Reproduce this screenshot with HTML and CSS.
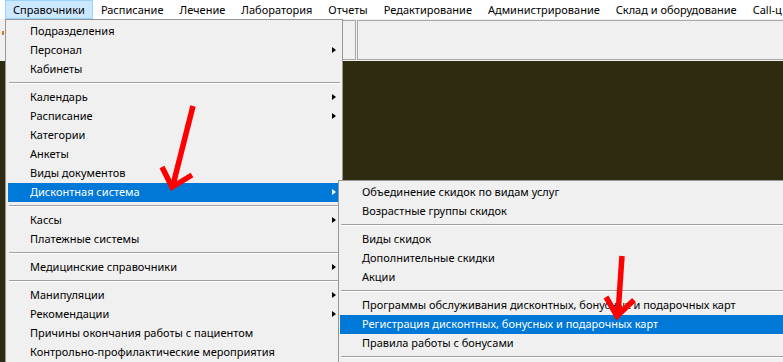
FILE: index.html
```html
<!doctype html>
<html lang="ru">
    <head>
        <meta charset="utf-8">
        <title>Справочники</title>
        <link rel="stylesheet" href="styles.css">
    </head>
    <body>
        <div class="menubar">
            <div class="mb-item active">Справочники</div>
            <div class="mb-item">Расписание</div>
            <div class="mb-item">Лечение</div>
            <div class="mb-item">Лаборатория</div>
            <div class="mb-item">Отчеты</div>
            <div class="mb-item">Редактирование</div>
            <div class="mb-item">Администрирование</div>
            <div class="mb-item">Склад и оборудование</div>
            <div class="mb-item">Call-ц</div>
        </div>
        <div class="toolbar">
            <div class="tb-left"><span class="tb-glyph"></span></div>
            <div class="tb-cell tb-small"></div>
            <div class="tb-cell tb-wide"></div>
        </div>
        <div class="workspace"></div>

        <!-- main dropdown -->
        <div class="dropdown main">
            <div class="item">Подразделения</div>
            <div class="item sub">Персонал</div>
            <div class="item">Кабинеты</div>
            <div class="sep"></div>
            <div class="item sub">Календарь</div>
            <div class="item sub">Расписание</div>
            <div class="item">Категории</div>
            <div class="item">Анкеты</div>
            <div class="item">Виды документов</div>
            <div class="item sub selected">Дисконтная система</div>
            <div class="sep"></div>
            <div class="item sub">Кассы</div>
            <div class="item">Платежные системы</div>
            <div class="sep"></div>
            <div class="item sub">Медицинские справочники</div>
            <div class="sep"></div>
            <div class="item sub">Манипуляции</div>
            <div class="item sub">Рекомендации</div>
            <div class="item">Причины окончания работы с пациентом</div>
            <div class="item">Контрольно-профилактические мероприятия</div>
        </div>

        <!-- discount submenu -->
        <div class="dropdown submenu">
            <div class="item">Объединение скидок по видам услуг</div>
            <div class="item">Возрастные группы скидок</div>
            <div class="sep"></div>
            <div class="item">Виды скидок</div>
            <div class="item">Дополнительные скидки</div>
            <div class="item">Акции</div>
            <div class="sep"></div>
            <div class="item">Программы обслуживания дисконтных, бонусных и подарочных карт</div>
            <div class="item selected">Регистрация дисконтных, бонусных и подарочных карт</div>
            <div class="item">Правила работы с бонусами</div>
            <div class="sep"></div>
        </div>

        <svg class="marks" width="783" height="362" viewBox="0 0 783 362">
            <g fill="none" stroke="#ff0000" stroke-width="5.5">
                <path d="M193 106 L173 185"/>
                <path d="M162 167 L172 187 L192 175"/>
                <path d="M622 256 L618 314"/>
                <path d="M606 297 L617 316 L634 300"/>
            </g>
        </svg>
    </body>
</html>
```

FILE: styles.css
```css
html, body {
    margin: 0;
    padding: 0;
}
body {
    position: relative;
    width: 783px;
    height: 362px;
    overflow: hidden;
    background: #2e2b11;
    font-family: "Noto Sans", "Open Sans", sans-serif;
    font-size: 11px;
    color: #000;
}

/* menu bar */
.menubar {
    display: flex;
    height: 19px;
    padding-left: 5px;
    background: #fff;
    white-space: nowrap;
    overflow: hidden;
}
.mb-item {
    line-height: 17px;
    padding: 0 7px;
    border: 1px solid transparent;
}
.mb-item.active {
    background: #cce8ff;
    border-color: #99d1ff;
}

/* toolbar strip */
.toolbar {
    display: flex;
    height: 42px;
    background: #f0f0f0;
}
.tb-left {
    width: 342px;
    position: relative;
}
.tb-glyph {
    position: absolute;
    left: 2px;
    top: 12px;
    width: 2px;
    height: 4px;
    background: #c8782a;
}
.tb-cell {
    margin-top: 1px;
    height: 38px;
    border-top: 1px solid #a8a8a8;
    border-bottom: 1px solid #a8a8a8;
}
.tb-small {
    width: 13px;
    border-right: 1px solid #a8a8a8;
}
.tb-wide {
    flex: 1;
    margin-left: 1px;
    border-left: 1px solid #a8a8a8;
}

.workspace {
    height: 301px;
    background: #2e2b11;
}

/* dropdown menus */
.dropdown {
    position: absolute;
    box-sizing: border-box;
    padding: 2px;
    background: #f0f0f0;
    border: 1px solid #979797;
    white-space: nowrap;
}
.dropdown.main {
    left: 5px;
    top: 19px;
    width: 338px;
    height: 360px;
}
.dropdown.submenu {
    left: 338px;
    top: 180px;
    width: 450px;
    height: 200px;
    padding-left: 1px;
}
.item {
    position: relative;
    height: 19px;
    line-height: 18px;
    padding-left: 22px;
}
.item.selected {
    background: #0078d7;
    color: #fff;
}
.item.sub::after {
    content: "";
    position: absolute;
    right: 4px;
    top: 6px;
    border-left: 4px solid #000;
    border-top: 3.5px solid transparent;
    border-bottom: 3.5px solid transparent;
}
.item.sub.selected::after {
    border-left-color: #fff;
}
.sep {
    height: 0;
    margin: 3px 0 4px 1px;
    border-top: 1px solid #a0a0a0;
    border-bottom: 1px solid #fff;
}

.marks {
    position: absolute;
    left: 0;
    top: 0;
    pointer-events: none;
}
```
